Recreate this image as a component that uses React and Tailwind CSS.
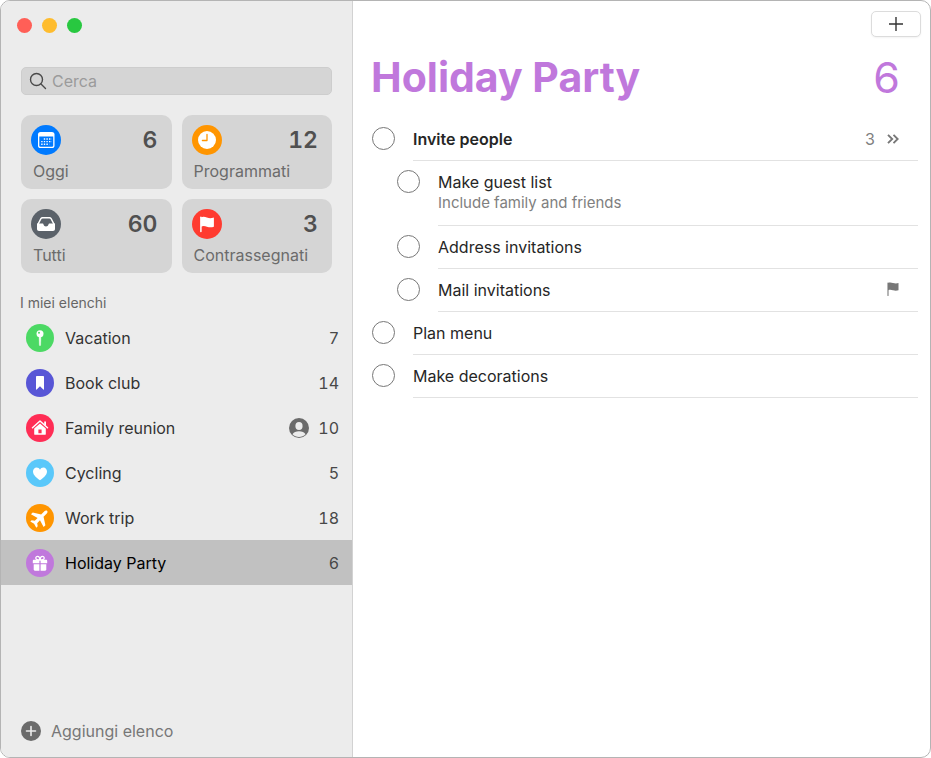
import React, { useState } from "react";

const CalendarIcon = () => (
  <svg viewBox="0 0 30 30" className="size-full" fill="none">
    <rect x="7" y="7" width="16.5" height="16" rx="2.6" fill="#fff" />
    <path d="M8.3 11.6h13.9v8.8a1.3 1.3 0 0 1-1.3 1.3H9.6a1.3 1.3 0 0 1-1.3-1.3z" fill="#007aff" />
    <g stroke="#fff" strokeWidth="1.4" strokeDasharray="1.4 1.2">
      <path d="M12.8 14h8" />
      <path d="M10.2 16.6h10.6" />
      <path d="M10.2 19.2h8" />
    </g>
  </svg>
);

const ClockIcon = () => (
  <svg viewBox="0 0 30 30" className="size-full" fill="none">
    <circle cx="15" cy="15" r="9" fill="#fff" />
    <path d="M15 9.5v6h-4.6" stroke="#ff9500" strokeWidth="1.3" strokeLinecap="round" strokeLinejoin="round" />
  </svg>
);

const TrayIcon = () => (
  <svg viewBox="0 0 30 30" className="size-full" fill="none">
    <path
      d="M6.8 15.6 9.9 9.7c.4-.7.9-1 1.7-1h6.8c.8 0 1.3.3 1.7 1l3.1 5.9"
      stroke="#fff"
      strokeWidth="1.4"
      strokeLinecap="round"
      strokeLinejoin="round"
    />
    <path
      d="M6 14.600h5.400c.7 0 1 .4 1.100 1 .3 1.200 1.300 1.900 2.500 1.900s2.200-.7 2.500-1.900c.1-.6.4-1 1.100-1H24v5.400c0 1.200-.8 2-2 2H8c-1.200 0-2-.8-2-2z"
      fill="#fff"
    />
  </svg>
);

const FlagIcon = () => (
  <svg viewBox="0 0 30 30" className="size-full" fill="none">
    <path d="M8.900 8.200v14.300" stroke="#fff" strokeWidth="1.500" strokeLinecap="round" />
    <path
      d="M8.900 8.500c1.600-.9 3.700-.9 6 0 2.300.9 4.500.8 6.200.2.500-.2.800 0 .8.500v8c0 .4-.2.600-.6.700-1.900.7-4 .6-6.400-.2-2.200-.8-4.300-.8-6 0z"
      fill="#fff"
    />
  </svg>
);

const PinIcon = () => (
  <svg viewBox="0 0 28 28" className="size-full" fill="none">
    <circle cx="14" cy="9.800" r="3.500" fill="#fff" />
    <path d="M13.100 12.500h1.800l-.3 8.300-.6 1.200-.6-1.200z" fill="#fff" stroke="#fff" strokeWidth=".4" />
    <circle cx="13" cy="8.700" r="1" fill="#4cd964" />
  </svg>
);

const BookmarkIcon = () => (
  <svg viewBox="0 0 28 28" className="size-full" fill="#fff">
    <path d="M10 8c0-.6.4-1 1-1h6c.6 0 1 .4 1 1v12.200c0 .5-.4.600-.7.300L14 17.200l-3.300 3.300c-.3.300-.7.200-.7-.3z" />
  </svg>
);

const HomeIcon = () => (
  <svg viewBox="0 0 28 28" className="size-full" fill="none">
    <path d="M6.500 13.700 14 7l7.500 6.700" stroke="#fff" strokeWidth="1.500" strokeLinecap="round" strokeLinejoin="round" />
    <path d="M18.200 7.500h1.800v4.300l-1.800-1.600z" fill="#fff" />
    <path
      fillRule="evenodd"
      d="M14 9.500l5.800 5.100v5.300c0 .6-.3.900-.9.900H9.100c-.6 0-.9-.3-.9-.9v-5.300zM12.400 15.500v3.800h3.200v-3.800z"
      fill="#fff"
    />
  </svg>
);

const HeartIcon = () => (
  <svg viewBox="0 0 28 28" className="size-full" fill="#fff">
    <path d="M14 21.200c-3-2-7-5-7-8.700C7 10.200 8.600 8.500 10.600 8.500c1.500 0 2.700.8 3.400 2.200.7-1.400 1.900-2.200 3.400-2.200 2 0 3.600 1.700 3.600 4 0 3.700-4 6.700-7 8.700z" />
  </svg>
);

const PlaneIcon = () => (
  <svg viewBox="0 0 24 24" className="size-full" fill="#fff">
    <g transform="rotate(45 12 12) translate(3.200 3) scale(.73)">
      <path d="M12 .5c-1.300 0-2 1.300-2 2.900v5L1.500 13.800v3l8.500-2.500v4.600l-3 2.200v2.300l5-1.300 5 1.300v-2.300l-3-2.200v-4.600l8.500 2.500v-3L14 8.400v-5c0-1.600-.7-2.900-2-2.900z" />
    </g>
  </svg>
);

const GiftIcon = () => (
  <svg viewBox="0 0 28 28" className="size-full" fill="none">
    <path
      d="M13.800 11.200c-2.200 0-4-.6-4-2.100 0-1 .7-1.700 1.700-1.700 1.500 0 2.300 1.700 2.300 3.800zM14.200 11.200c2.200 0 4-.6 4-2.100 0-1-.7-1.700-1.700-1.700-1.500 0-2.300 1.700-2.300 3.800z"
      stroke="#fff"
      strokeWidth="1.300"
    />
    <path d="M8 10.700h5.400v3.600H6.800v-2.400c0-.7.500-1.200 1.200-1.200zM14.600 10.700H20c.7 0 1.200.5 1.200 1.200v2.400h-6.600z" fill="#fff" />
    <path d="M7.700 15.300h5.700v6.400H8.900c-.7 0-1.200-.5-1.200-1.200zM14.600 15.300h5.700v5.200c0 .7-.5 1.200-1.200 1.200h-4.500z" fill="#fff" />
  </svg>
);

const SharedIcon = () => (
  <svg viewBox="0 0 20 20" className="size-5" fill="none">
    <circle cx="10" cy="10" r="10" fill="#6b6b6b" />
    <ellipse cx="10" cy="8" rx="3.600" ry="4" fill="#ececec" />
    <path d="M3.500 16.200c1-1.900 3.500-3 6.500-3s5.500 1.100 6.500 3c-1.700 1.700-4 2.700-6.500 2.700s-4.800-1-6.500-2.700z" fill="#ececec" />
  </svg>
);

const SearchIcon = () => (
  <svg viewBox="0 0 18 18" className="size-[18px] shrink-0" fill="none" stroke="#4a4a4a" strokeWidth="1.400" strokeLinecap="round">
    <circle cx="7.500" cy="7.500" r="6" />
    <path d="m12 12 4.500 4.500" />
  </svg>
);

const smartLists = [
  { name: "Oggi", count: 6, color: "bg-[#007aff]", Icon: CalendarIcon },
  { name: "Programmati", count: 12, color: "bg-[#ff9500]", Icon: ClockIcon },
  { name: "Tutti", count: 60, color: "bg-[#5b626a]", Icon: TrayIcon },
  { name: "Contrassegnati", count: 3, color: "bg-[#ff3b30]", Icon: FlagIcon },
];

const lists = [
  { name: "Vacation", count: 7, color: "bg-[#4cd964]", Icon: PinIcon },
  { name: "Book club", count: 14, color: "bg-[#5856d6]", Icon: BookmarkIcon },
  { name: "Family reunion", count: 10, color: "bg-[#ff2d55]", Icon: HomeIcon, shared: true },
  { name: "Cycling", count: 5, color: "bg-[#5ac8fa]", Icon: HeartIcon },
  { name: "Work trip", count: 18, color: "bg-[#ff9500]", Icon: PlaneIcon },
  { name: "Holiday Party", count: 6, color: "bg-[#c078dc]", Icon: GiftIcon },
];

const tasks = [
  { id: "invite", title: "Invite people", bold: true, subtasks: 3 },
  { id: "guests", title: "Make guest list", note: "Include family and friends", nested: true },
  { id: "address", title: "Address invitations", nested: true },
  { id: "mail", title: "Mail invitations", nested: true, flagged: true },
  { id: "menu", title: "Plan menu" },
  { id: "decorations", title: "Make decorations" },
];

const Sidebar = ({ selected, onSelect }) => (
  <aside className="flex w-[352px] shrink-0 flex-col border-r border-[#d2d2d2] bg-[#ececec]">
    <div className="flex gap-[10px] px-4 pt-[17px]">
      <button aria-label="Close" className="size-[15px] rounded-full bg-[#ff5f57]" />
      <button aria-label="Minimize" className="size-[15px] rounded-full bg-[#febc2e]" />
      <button aria-label="Zoom" className="size-[15px] rounded-full bg-[#28c840]" />
    </div>

    <label className="mx-5 mt-[34px] flex h-7 items-center gap-[5px] rounded-[5px] border border-[#cdcdcd] bg-[#d5d5d5] px-[7px]">
      <SearchIcon />
      <input
        type="text"
        aria-label="Cerca"
        placeholder="Cerca"
        className="w-full bg-transparent text-base text-[#333] outline-none placeholder:text-[#9b9b9b]"
      />
    </label>

    <div className="mx-5 mt-5 grid grid-cols-2 gap-[10px]">
      {smartLists.map(({ name, count, color, Icon }) => (
        <button key={name} className="h-[74px] rounded-[10px] bg-[#d5d5d5] px-[10px] pt-1 text-left">
          <span className="flex items-center justify-between">
            <span className={`size-[30px] rounded-full ${color}`}>
              <Icon />
            </span>
            <span className="pr-1 text-[23px] leading-7 font-semibold text-[#505050] tabular-nums">{count}</span>
          </span>
          <span className="mt-1 block pl-[2px] text-base leading-6 text-[#6b6b6b]">{name}</span>
        </button>
      ))}
    </div>

    <h2 className="mt-5 pl-[19px] text-sm leading-5 text-[#666]">I miei elenchi</h2>
    <nav className="mt-[2px]">
      {lists.map(({ name, count, color, Icon, shared }) => (
        <button
          key={name}
          onClick={() => onSelect(name)}
          className={`flex h-[45px] w-full items-center pr-[13px] pl-[25px] text-base ${
            selected === name ? "bg-[#c1c1c1] text-black" : "text-[#333]"
          }`}
        >
          <span className={`mr-[11px] size-7 rounded-full ${color}`}>
            <Icon />
          </span>
          <span className="flex-1 text-left">{name}</span>
          {shared && <SharedIcon />}
          <span className="min-w-[30px] text-right text-[#484848] tabular-nums">{count}</span>
        </button>
      ))}
    </nav>

    <button className="mt-auto mb-4 flex items-center gap-[10px] self-start pl-5 text-base leading-5 text-[#777]">
      <svg viewBox="0 0 20 20" className="size-5" fill="none">
        <circle cx="10" cy="10" r="10" fill="#6b6b6b" />
        <path d="M10 5.500v9M5.500 10h9" stroke="#ececec" strokeWidth="1.600" strokeLinecap="round" />
      </svg>
      Aggiungi elenco
    </button>
  </aside>
);

const TaskRow = ({ task, checked, onToggle }) => (
  <li className={`flex ${task.nested ? "pl-[25px]" : ""}`}>
    <input
      type="checkbox"
      id={task.id}
      checked={checked}
      onChange={() => onToggle(task.id)}
      className="mt-[9px] mr-[18px] size-[23px] shrink-0 appearance-none rounded-full border border-[#777] checked:bg-[#c078dc]"
    />
    <div className="flex min-h-[43px] flex-1 items-start border-b border-[#e2e2e2] pt-[10px]">
      <div className="flex-1">
        <label
          htmlFor={task.id}
          className={`block text-base leading-[22px] text-[#262626] ${task.bold ? "font-semibold" : ""}`}
        >
          {task.title}
        </label>
        {task.note && <p className="pb-3 text-[15px] leading-5 text-[#808080]">{task.note}</p>}
      </div>
      {task.subtasks && (
        <button aria-label="Show subtasks" className="mr-[19px] flex items-center gap-3 text-base leading-[22px] text-[#808080]">
          {task.subtasks}
          <svg viewBox="0 0 12 10" className="h-[10px] w-3" fill="none" stroke="#777" strokeWidth="1.900">
            <path d="m1 .8 4.200 4.200L1 9.200M6.500.8 10.700 5 6.500 9.200" />
          </svg>
        </button>
      )}
      {task.flagged && (
        <svg viewBox="0 0 12 14" className="mt-[3px] mr-[19px] h-[14px] w-3" fill="none">
          <path d="M1 1v12.500" stroke="#777" strokeWidth="1.100" strokeLinecap="round" />
          <path d="M1 1c1.500-.7 3.200-.6 5 0 1.900.6 3.700.6 5.500.1v7.200c-1.800.5-3.600.5-5.500 0-1.800-.6-3.500-.7-5 0z" fill="#777" />
        </svg>
      )}
    </div>
  </li>
);

const App = () => {
  const [selected, setSelected] = useState("Holiday Party");
  const [done, setDone] = useState({});

  const handleToggle = (id) => setDone((prev) => ({ ...prev, [id]: !prev[id] }));

  const current = lists.find((l) => l.name === selected);

  return (
    <div className="flex min-h-screen overflow-hidden rounded-[10px] border border-[#b4b4b4] bg-white font-[Inter,sans-serif]">
      <Sidebar selected={selected} onSelect={setSelected} />

      <main className="flex-1">
        <div className="flex justify-end pt-[10px] pr-[9px]">
          <button
            aria-label="Add reminder"
            className="flex h-[26px] w-[50px] items-center justify-center rounded-[5px] border border-[#dcdcdc] bg-white shadow-xs"
          >
            <svg viewBox="0 0 14 14" className="size-[14px]" stroke="#333" strokeWidth="1.400">
              <path d="M7 0v14M0 7h14" />
            </svg>
          </button>
        </div>

        <header className="mt-[14px] flex items-center justify-between pr-[30px] pl-[18px] leading-[52px] text-[#c078dc]">
          <h1 className="text-[41px] font-bold">{current.name}</h1>
          <span className="text-[43px]">{current.count}</span>
        </header>

        <ul className="mt-[15px] pr-3 pl-[19px]">
          {tasks.map((task) => (
            <TaskRow key={task.id} task={task} checked={!!done[task.id]} onToggle={handleToggle} />
          ))}
        </ul>
      </main>
    </div>
  );
};

export default App;
